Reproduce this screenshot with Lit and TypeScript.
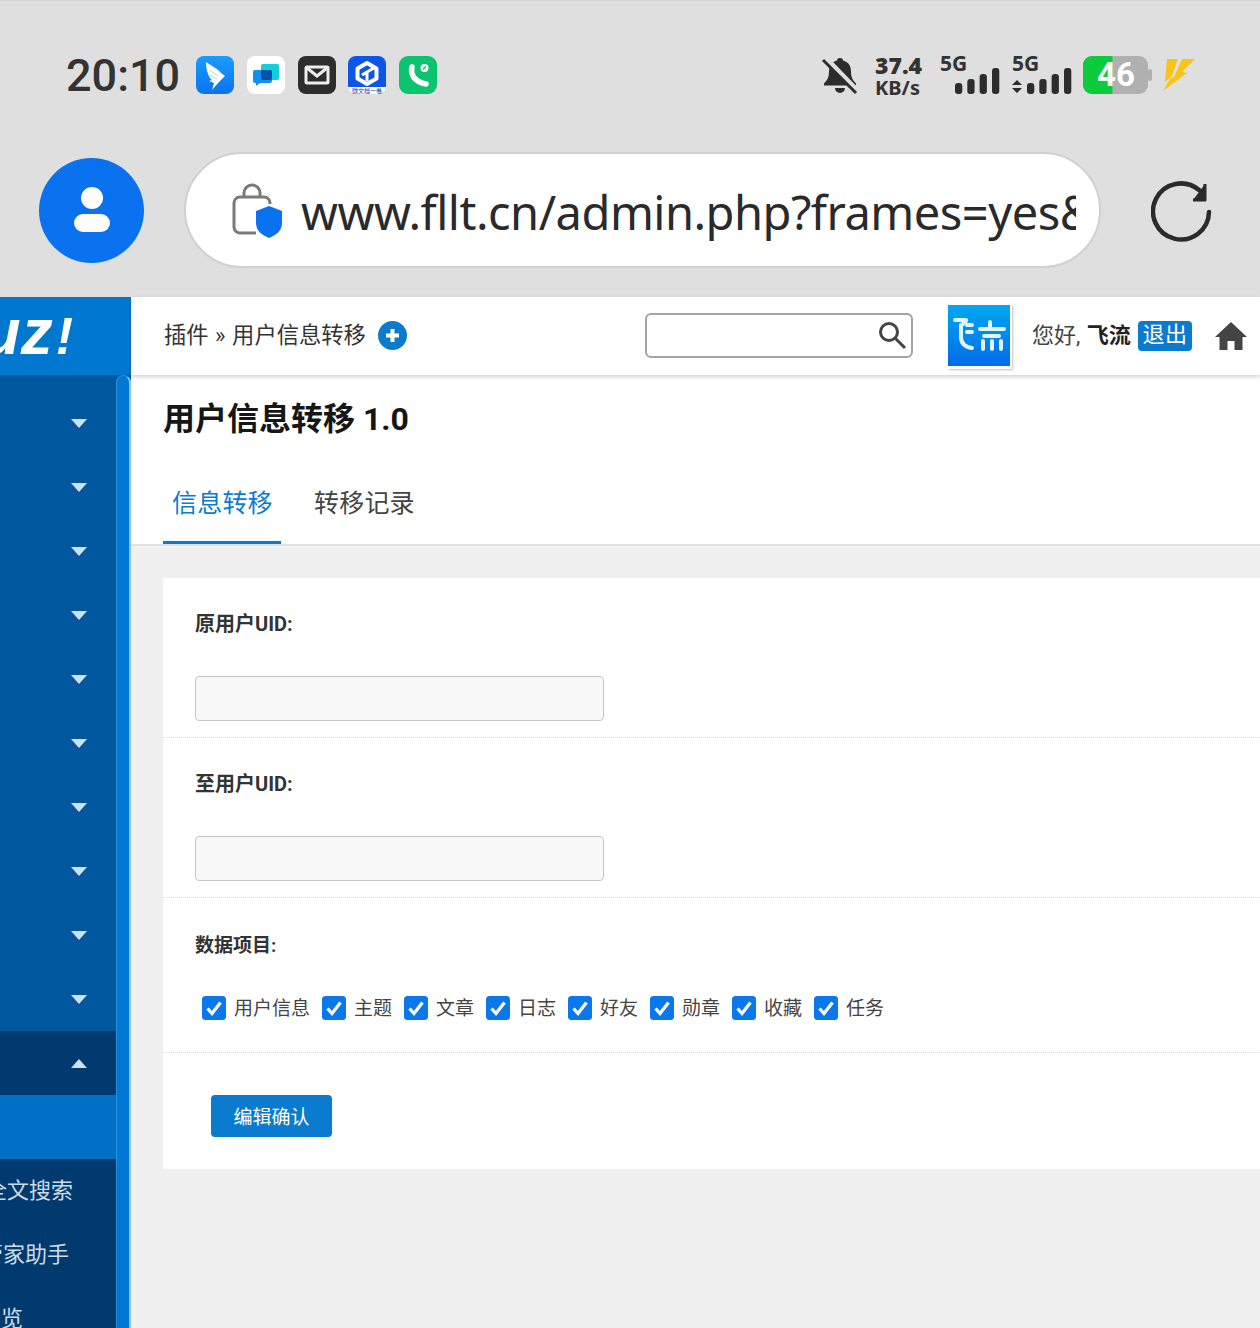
import { LitElement, html, css, svg } from "lit";
import { customElement } from "lit/decorators.js";

@customElement("app-root")
export class AppRoot extends LitElement {
  static styles = css`
    :host { display: block; width: 1260px; height: 1328px; overflow: hidden; font-family: Roboto, "Noto Sans CJK SC", sans-serif; color: #333; background: #f0f0f0; }
    * { box-sizing: border-box; }
    svg { display: block; flex: none; }
    .chrome { height: 297px; background: #dfdfdf; border-top: 1px solid #d2d2d2; display: flex; flex-direction: column; }
    .status { height: 151px; padding: 55px 0 0 66px; display: flex; align-items: flex-start; }
    .time { font-size: 45px; line-height: 39px; font-weight: 500; color: #333; width: 130px; }
    .apps { display: flex; gap: 12.75px; }
    .right { margin-left: auto; margin-right: 65px; display: flex; align-items: flex-start; }
    .speed { margin-left: 17px; width: 65px; font-weight: 700; color: #333; font-family: "Noto Sans", sans-serif; }
    .speed b { display: block; font-size: 23px; line-height: 24px; margin-top: -3px; }
    .speed span { display: block; font-size: 20px; line-height: 22px; }
    .sig { display: flex; flex-direction: column; width: 72px; }
    .sig + .sig { width: 71px; }
    .sig span { font-family: "Noto Sans", sans-serif; font-weight: 700; font-size: 21px; line-height: 20px; color: #333; margin-top: -3px; height: 20px; }
    .sig svg { margin-top: -6px; }
    .bolt { margin: 2px 0 0 10px; }
    .urlrow { display: flex; align-items: center; height: 116px; padding-left: 39px; }
    .avatar { width: 105px; height: 105px; border-radius: 50%; background: #0a72ee; display: flex; align-items: center; justify-content: center; }
    .pill { margin-left: 40px; width: 917px; height: 116px; border-radius: 58px; background: #fff; border: 2px solid #d0d0d0; display: flex; align-items: center; padding: 0 23px 0 46px; overflow: hidden; }
    .url { margin-left: 19px; padding-top: 4px; font-family: "Noto Sans", sans-serif; font-size: 47px; color: #2a2a2a; white-space: nowrap; overflow: hidden; flex: 1; line-height: 60px; letter-spacing: -0.5px; }
    .reload { margin: 4px 0 0 50px; }

    .admin { display: flex; height: 1031px; }
    .side { width: 131px; flex: none; display: flex; flex-direction: column; background: #0078d0; overflow: hidden; }
    .logo { height: 78px; display: flex; justify-content: flex-end; align-items: baseline; padding: 0 58px 0 0; font: italic 700 64px/71px "Liberation Sans", sans-serif; color: #fff; white-space: nowrap; }
    .logo span { font-size: 52px; margin-left: 3px; }
    .menu { flex: 1; display: flex; min-height: 0; background: #00589e; }
    .items { width: 116px; flex: none; overflow: hidden; padding-top: 16px; }
    .rail { flex: 1; background: #0078d4; border-radius: 8px 8px 0 0; border: 1px solid #2f8fd8; border-bottom: 0; border-right: 2px solid #8cc4ee; }
    .item { height: 64px; display: flex; justify-content: flex-end; align-items: center; padding-right: 29px; }
    .tri { width: 0; height: 0; border-left: 8px solid transparent; border-right: 8px solid transparent; border-top: 9px solid #cfe0ef; }
    .tri.up { border-top: 0; border-bottom: 9px solid #cfe0ef; }
    .item.open { background: #003a6e; }
    .item.sel { background: #0070c4; }
    .sub { background: #003a6e; height: 400px; }
    .subitem { height: 64px; padding-bottom: 7px; display: flex; justify-content: flex-end; align-items: center; font-size: 22px; color: #cddbe8; white-space: nowrap; }

    .main { flex: 1; min-width: 0; background: #f0f0f0; display: flex; flex-direction: column; }
    .top { height: 78px; background: #fff; box-shadow: 0 2px 4px rgba(0,0,0,.18); position: relative; display: flex; align-items: center; padding: 0 0 2px 33px; }
    .crumb { font-size: 22.3px; color: #333; white-space: nowrap; word-spacing: 1px; padding-bottom: 5px; width: 202px; }
    .plus { margin-left: 12px; }
    .search { margin-left: 238px; width: 268px; height: 45px; border: 2px solid #a4a4a4; border-radius: 6px; display: flex; align-items: center; justify-content: flex-end; padding-right: 4px; background: #fff; }
    .logobox { margin: 3px 0 0 35px; width: 64px; height: 64px; background: #fff; box-shadow: 1px 1px 2px rgba(0,0,0,.25); padding: 0 2px 3px 0; }
    .logoin { width: 100%; height: 100%; background: linear-gradient(#00a8f0, #006be8); }
    .hello { margin-left: 20px; padding-bottom: 5px; font-size: 22px; color: #444; white-space: nowrap; width: 106px; }
    .hello b { color: #222; font-size: 22px; margin-left: 1px; }
    .out { width: 54px; height: 30px; margin-top: 2px; background: #0b7bd0; color: #fff; border-radius: 4px; font-size: 22px; line-height: 28px; text-align: center; letter-spacing: 0.4px; }
    .home { margin: 2px 0 0 23px; }
    .head { background: #fff; height: 171px; border-bottom: 2px solid #e2e2e2; padding: 0 0 0 32px; display: flex; flex-direction: column; }
    h1 { margin: 27px 0 0; font-size: 32px; line-height: 34px; color: #161616; font-weight: 700; }
    .tabs { display: flex; margin-top: 44px; }
    .tab { height: 64px; font-size: 25px; line-height: 40px; padding: 4px 8px 0 9px; color: #444; width: 118px; margin-right: 24px; white-space: nowrap; letter-spacing: 0.2px; }
    .tab.on { color: #0b7bd0; border-bottom: 3px solid #0b7bd0; }
    .card { margin: 32px 0 0 32px; background: #fff; height: 591px; display: flex; flex-direction: column; }
    .row { height: 160px; padding: 33px 0 0 32px; border-bottom: 1px dotted #bfeaf0; }
    .row label { display: block; font-size: 20px; line-height: 27px; font-weight: 700; color: #333; }
    .field { display: block; margin-top: 38px; width: 409px; height: 45px; background: #f8f8f8; border: 1px solid #c6c6c6; border-radius: 4px; }
    .row.checks { height: 155px; padding-top: 35px; }
    .row.checks label { font-size: 19px; line-height: 26px; }
    .boxes { display: flex; margin: 35px 0 0 7px; }
    .chk { display: flex; align-items: center; font-size: 19px; color: #444; margin-right: 12px; height: 28px; white-space: nowrap; }
    .chk svg { margin-right: 8px; }
    .chk span { padding-bottom: 4px; }
    .foot { padding: 42px 0 0 48px; }
    .btn { width: 121px; height: 42px; padding-bottom: 2px; background: #0b7bd0; color: #fff; font-size: 19px; border-radius: 4px; display: flex; align-items: center; justify-content: center; }
  `;

  private appIcons() {
    return html`
      <svg width="38" height="38" viewBox="0 0 38 38"><defs><linearGradient id="d" x1="0" y1="0" x2="0" y2="1"><stop offset="0" stop-color="#1a9cff"/><stop offset="1" stop-color="#0a72ee"/></linearGradient></defs><rect width="38" height="38" rx="8" fill="url(#d)"/><path d="M10 6c6 4 12 7 15 11l4 3-6 6-7 8 2-7-5-2 3-1c-4-3-6-11-6-18z" fill="#fff"/><path d="M13 14l9 6M14 19l7 4" stroke="#a8d8ff" stroke-width="1"/></svg>
      <svg width="38" height="38" viewBox="0 0 38 38"><rect width="38" height="38" rx="8" fill="#fff"/><path d="M16 8h14a2 2 0 0 1 2 2v12a2 2 0 0 1-2 2h-14a2 2 0 0 1-2-2V10a2 2 0 0 1 2-2z" fill="#12cfdc"/><path d="M8 14h15a2 2 0 0 1 2 2v9a2 2 0 0 1-2 2H13l-4 3v-3H8a2 2 0 0 1-2-2v-9a2 2 0 0 1 2-2z" fill="#1290f0"/><rect x="14" y="14" width="11" height="10" rx="2" fill="#0b4fa8"/></svg>
      <svg width="38" height="38" viewBox="0 0 38 38"><rect width="38" height="38" rx="8" fill="#2d2d2d"/><rect x="6.500" y="9.500" width="25" height="19" rx="2.500" fill="#eee"/><rect x="9.500" y="12.500" width="19" height="13" fill="#2d2d2d"/><path d="M9 12l10 8 10-8" fill="none" stroke="#eee" stroke-width="3"/></svg>
      <svg width="38" height="38" viewBox="0 0 38 38"><rect width="38" height="38" rx="8" fill="#0b55e8"/><path d="M0 31h38a8 7 0 0 1-8 7H8a8 7 0 0 1-8-7z" fill="#fff"/><path d="M19 7l9.500 5.500v10L19 28l-9.500-5.500v-10z" fill="none" stroke="#fff" stroke-width="4" stroke-linejoin="round"/><path d="M19 25v-9l7-4M19 16l-5 3" fill="none" stroke="#fff" stroke-width="3"/><text x="19" y="37" font-size="6" text-anchor="middle" fill="#23349c" font-family="Noto Sans CJK SC">微文档一卷</text></svg>
      <svg width="38" height="38" viewBox="0 0 38 38"><rect width="38" height="38" rx="9" fill="#0cc46f"/><path d="M13 11c-2 8 3 15 14 17" fill="none" stroke="#fff" stroke-width="5.500" stroke-linecap="round"/><circle cx="25.500" cy="12" r="4" fill="#fff"/><path d="M24 13.500l3-3" stroke="#0cc46f" stroke-width="1.200"/></svg>
    `;
  }

  private bars() {
    const xs = [15, 27.3, 39.6, 52];
    const hs = [11, 15, 20, 26];
    return xs.map((x, i) => svg`<rect x=${x} y=${27 - hs[i]} width="7.300" height=${hs[i]} rx="3" fill="#2d2d2d" />`);
  }

  render() {
    return html`
      <div class="chrome">
        <div class="status">
          <div class="time">20:10</div>
          <div class="apps">${this.appIcons()}</div>
          <div class="right">
            <svg width="36" height="39" viewBox="0 0 36 39"><path d="M18 2c2 0 3 1 3 2.500 6 1.500 8 6 8 11 0 6 2 9 5 12v2H2v-2c3-3 5-6 5-12 0-5 2-9.500 8-11C15 3 16 2 18 2z" fill="#2d2d2d"/><path d="M13 32h10a5 5 0 0 1-10 0z" fill="#2d2d2d"/><path d="M3 2l32 33" stroke="#dfdfdf" stroke-width="6"/><path d="M1 4l33 33" stroke="#2d2d2d" stroke-width="3"/></svg>
            <div class="speed"><b>37.4</b><span>KB/s</span></div>
            <div class="sig"><span>5G</span><svg width="60" height="27" viewBox="0 0 60 27">${this.bars()}</svg></div>
            <div class="sig"><span>5G</span><svg width="60" height="27" viewBox="0 0 60 27"><path d="M0 18l5-5 5 5zM0 21l5 5 5-5z" fill="#2d2d2d"/>${this.bars()}</svg></div>
            <svg width="69" height="39" viewBox="0 0 69 39"><rect width="65" height="38" rx="9" fill="#b0b0b0"/><path d="M9 0h20.500v38H9a9 9 0 0 1-9-9V9a9 9 0 0 1 9-9z" fill="#0ccb3c"/><rect x="65" y="13" width="4" height="12" rx="2" fill="#b0b0b0"/><text x="33" y="30" font-size="33" font-weight="700" text-anchor="middle" fill="#fff" font-family="Roboto">46</text></svg>
            <svg class="bolt" width="33" height="34" viewBox="0 0 33 34"><path d="M5 1h11L10 18l-7 6zM20 1h13L20 14l5 1L1 33l7-12-3 1 7-3z" fill="#f8c418"/></svg>
          </div>
        </div>
        <div class="urlrow">
          <div class="avatar"><svg width="40" height="46" viewBox="0 0 40 46"><circle cx="20" cy="11" r="11" fill="#fff"/><rect x="2" y="27" width="36" height="18" rx="9" fill="#fff"/></svg></div>
          <div class="pill">
            <svg width="50" height="56" viewBox="0 0 50 56"><path d="M12 15V11a8 8 0 0 1 16 0v4" fill="none" stroke="#7a7a7a" stroke-width="3"/><path d="M24 51H8a6 6 0 0 1-6-6V21a6 6 0 0 1 6-6h24a6 6 0 0 1 6 6v1" fill="none" stroke="#7a7a7a" stroke-width="3"/><path d="M37 24l13 5v12c0 8-6 12-13 15-7-3-13-7-13-15V29z" fill="#0a72ee"/></svg>
            <div class="url">www.fllt.cn/admin.php?frames=yes&amp;action=plugins</div>
          </div>
          <svg class="reload" width="62" height="62" viewBox="0 0 62 62"><path d="M58 31a28 28 0 1 1-10-22" fill="none" stroke="#2b2b2b" stroke-width="4.500" stroke-linecap="round"/><path d="M54 3v16H42" fill="#2b2b2b" stroke="#2b2b2b" stroke-width="3" stroke-linejoin="round"/></svg>
        </div>
      </div>
      <div class="admin">
        <div class="side">
          <div class="logo">Discuz<span>!</span></div>
          <div class="menu">
            <div class="items">
              ${Array.from({ length: 10 }, () => html`<div class="item"><div class="tri"></div></div>`)}
              <div class="item open"><div class="tri up"></div></div>
              <div class="item sel"></div>
              <div class="sub">
                <div class="subitem" style="padding-right:43px">全文搜索</div>
                <div class="subitem" style="padding-right:47px">管家助手</div>
                <div class="subitem" style="padding-right:93px">浏览</div>
              </div>
            </div>
            <div class="rail"></div>
          </div>
        </div>
        <div class="main">
          <div class="top">
            <div class="crumb">插件 » 用户信息转移</div>
            <svg class="plus" width="29" height="29" viewBox="0 0 29 29"><circle cx="14.500" cy="14.500" r="14.500" fill="#0b7bd0"/><path d="M14.500 8v13M8 14.500h13" stroke="#fff" stroke-width="4"/></svg>
            <div class="search"><svg width="30" height="30" viewBox="0 0 30 30"><circle cx="12" cy="12" r="8.500" fill="none" stroke="#444" stroke-width="3"/><path d="M18 18l10 10" stroke="#444" stroke-width="3"/></svg></div>
            <div class="logobox"><div class="logoin"><svg width="62" height="61" viewBox="0 0 62 61"><path d="M7 15h11c1 0-2 4-5 5v12c0 7 4 10 11 11" fill="none" stroke="#e0f4fc" stroke-width="4" stroke-linecap="round" stroke-linejoin="round"/><path d="M19 20h5M19 27h5M42 17v5M32 24h24M36 31h15M35 36v8M44 36v8M53 36v8" fill="none" stroke="#e0f4fc" stroke-width="4" stroke-linecap="round"/></svg></div></div>
            <div class="hello">您好, <b>飞流</b></div>
            <div class="out">退出</div>
            <svg class="home" width="32" height="28" viewBox="0 0 32 28"><path d="M16 0L32 15h-4.500v13H19.500v-9h-7v9H4.500V15H0z" fill="#444"/></svg>
          </div>
          <div class="head">
            <h1>用户信息转移 1.0</h1>
            <div class="tabs"><div class="tab on">信息转移</div><div class="tab">转移记录</div></div>
          </div>
          <div class="card">
            <div class="row"><label>原用户UID:</label><span class="field"></span></div>
            <div class="row"><label>至用户UID:</label><span class="field"></span></div>
            <div class="row checks"><label>数据项目:</label>
              <div class="boxes">
                ${["用户信息", "主题", "文章", "日志", "好友", "勋章", "收藏", "任务"].map(
                  (t) => html`<div class="chk"><svg width="24" height="24" viewBox="0 0 24 24"><rect width="24" height="24" rx="3.500" fill="#0a78ea"/><path d="M5.500 12.500l4.500 5 8.500-11" fill="none" stroke="#fff" stroke-width="3.300"/></svg><span>${t}</span></div>`
                )}
              </div>
            </div>
            <div class="foot"><div class="btn">编辑确认</div></div>
          </div>
        </div>
      </div>
    `;
  }
}
